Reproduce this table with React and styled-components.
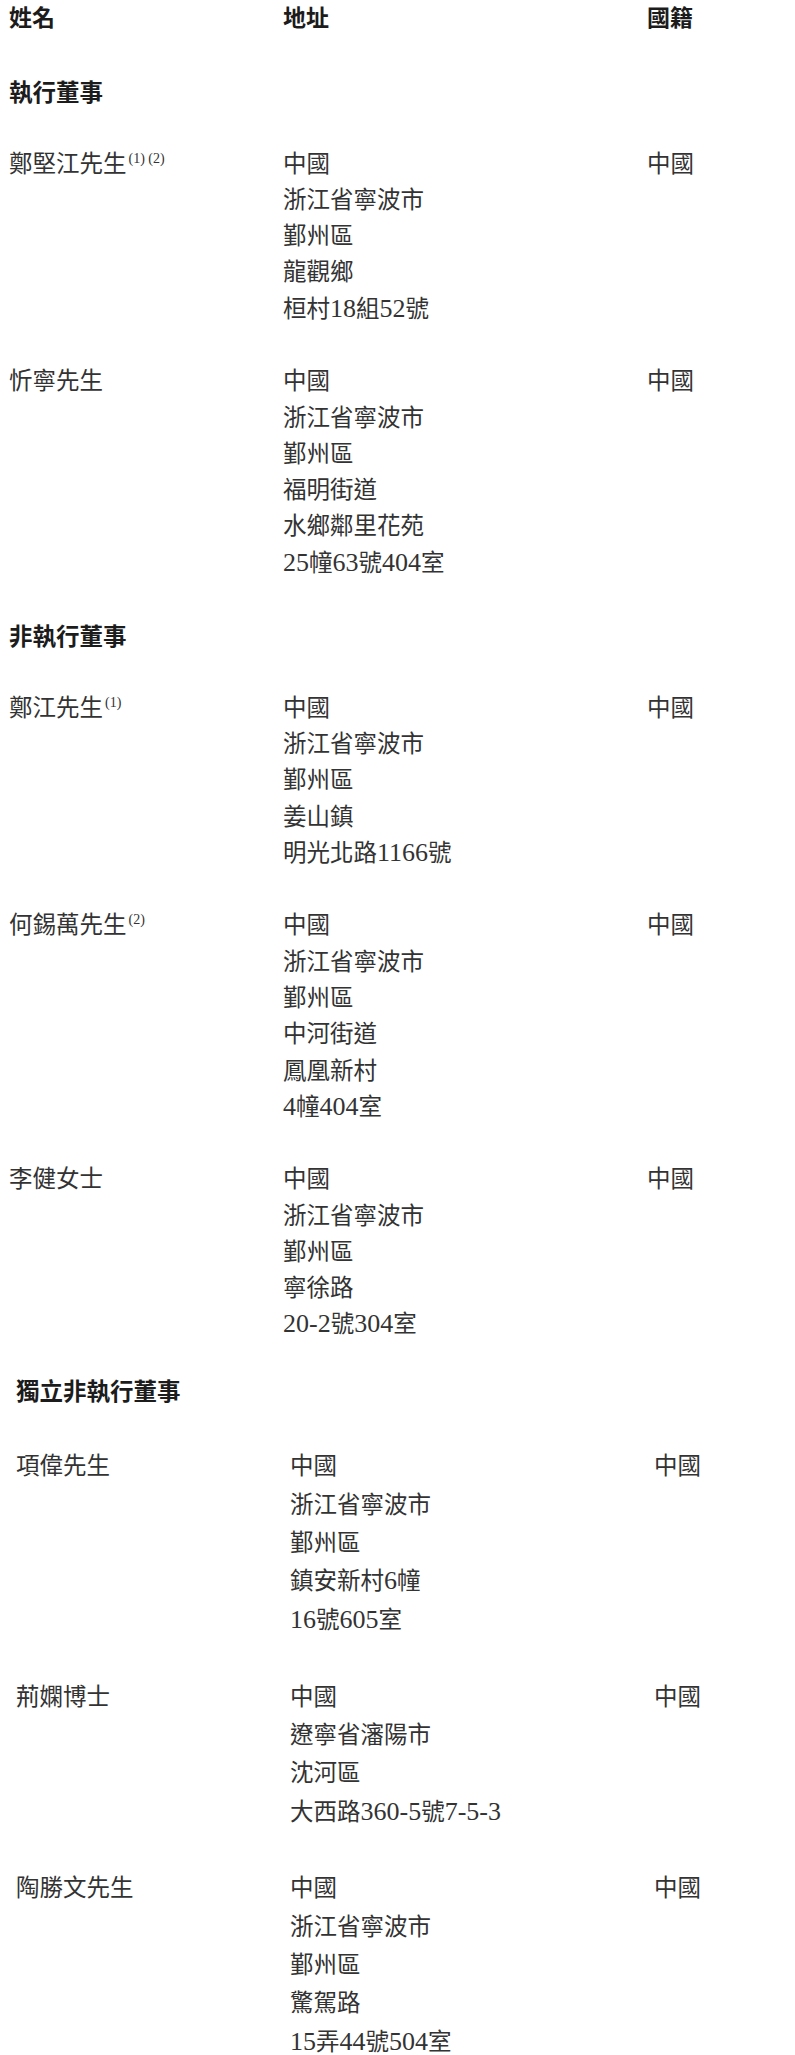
import React from 'react';
import styled, { createGlobalStyle } from 'styled-components';

const serif = `"Liberation Serif", "Noto Sans CJK TC", serif`;
const sans = `"Noto Sans CJK TC", "Noto Sans", sans-serif`;
const unit = 36.28;
const wideUnit = 38.35;

const GlobalStyle = createGlobalStyle`
  html, body {
    margin: 0;
    padding: 0;
    background: #ffffff;
  }
`;

const Page = styled.div`
  width: 795px;
  min-height: 2055px;
  box-sizing: border-box;
  padding: 0 0 0 9px;
  font-family: ${serif};
  font-size: 23.5px;
  color: #333333;
`;

const Grid = styled.div`
  display: grid;
  grid-template-columns: 274px 364px 1fr;
  line-height: ${(p) => p.lh}px;
`;

const HeaderRow = styled(Grid)`
  font-family: ${sans};
  font-weight: 700;
  font-size: 23px;
  color: #1c1c1c;
  height: 32px;
`;

const Section = styled.section`
  padding-left: ${(p) => (p.shift ? 7 : 0)}px;
  margin-top: ${(p) => p.top}px;
`;

const SectionTitle = styled.h2`
  margin: 0;
  font-family: ${sans};
  font-weight: 700;
  font-size: 23.5px;
  color: #1c1c1c;
  line-height: ${(p) => p.lh}px;
`;

const Row = styled(Grid)`
  margin-top: ${(p) => p.lh}px;
`;

const Lines = styled.div`
  display: flex;
  flex-direction: column;
`;

const Digits = styled.span`
  font-size: 26px;
`;

const Note = styled.sup`
  font-size: 14px;
  line-height: 0;
  vertical-align: 0;
  position: relative;
  top: -9px;
  margin-left: 2px;
`;

// digits in the reference print a bit larger than the ideographs
const withDigits = (text) =>
  text.split(/([0-9\-]+)/).map((part, i) =>
    /[0-9]/.test(part) ? <Digits key={i}>{part}</Digits> : part
  );

const sections = [
  {
    title: '執行董事',
    top: 41,
    lh: unit,
    rows: [
      {
        name: '鄭堅江先生',
        note: '(1) (2)',
        address: ['中國', '浙江省寧波市', '鄞州區', '龍觀鄉', '桓村18組52號'],
      },
      {
        name: '忻寧先生',
        address: ['中國', '浙江省寧波市', '鄞州區', '福明街道', '水鄉鄰里花苑', '25幢63號404室'],
      },
    ],
  },
  {
    title: '非執行董事',
    top: unit,
    lh: unit,
    rows: [
      {
        name: '鄭江先生',
        note: '(1)',
        address: ['中國', '浙江省寧波市', '鄞州區', '姜山鎮', '明光北路1166號'],
      },
      {
        name: '何錫萬先生',
        note: '(2)',
        address: ['中國', '浙江省寧波市', '鄞州區', '中河街道', '鳳凰新村', '4幢404室'],
      },
      {
        name: '李健女士',
        address: ['中國', '浙江省寧波市', '鄞州區', '寧徐路', '20-2號304室'],
      },
    ],
  },
  {
    title: '獨立非執行董事',
    top: 28,
    lh: wideUnit,
    shift: true,
    rows: [
      {
        name: '項偉先生',
        address: ['中國', '浙江省寧波市', '鄞州區', '鎮安新村6幢', '16號605室'],
      },
      {
        name: '荊嫻博士',
        address: ['中國', '遼寧省瀋陽市', '沈河區', '大西路360-5號7-5-3'],
      },
      {
        name: '陶勝文先生',
        address: ['中國', '浙江省寧波市', '鄞州區', '驚駕路', '15弄44號504室'],
      },
    ],
  },
];

export default function App() {
  return (
    <Page>
      <GlobalStyle />
      <HeaderRow lh={32}>
        <div>姓名</div>
        <div>地址</div>
        <div>國籍</div>
      </HeaderRow>
      {sections.map((s) => (
        <Section key={s.title} top={s.top} shift={s.shift}>
          <SectionTitle lh={s.lh}>{s.title}</SectionTitle>
          {s.rows.map((r) => (
            <Row key={r.name} lh={s.lh}>
              <div>
                {r.name}
                {r.note && <Note>{r.note}</Note>}
              </div>
              <Lines>
                {r.address.map((line) => (
                  <span key={line}>{withDigits(line)}</span>
                ))}
              </Lines>
              <div>中國</div>
            </Row>
          ))}
        </Section>
      ))}
    </Page>
  );
}
